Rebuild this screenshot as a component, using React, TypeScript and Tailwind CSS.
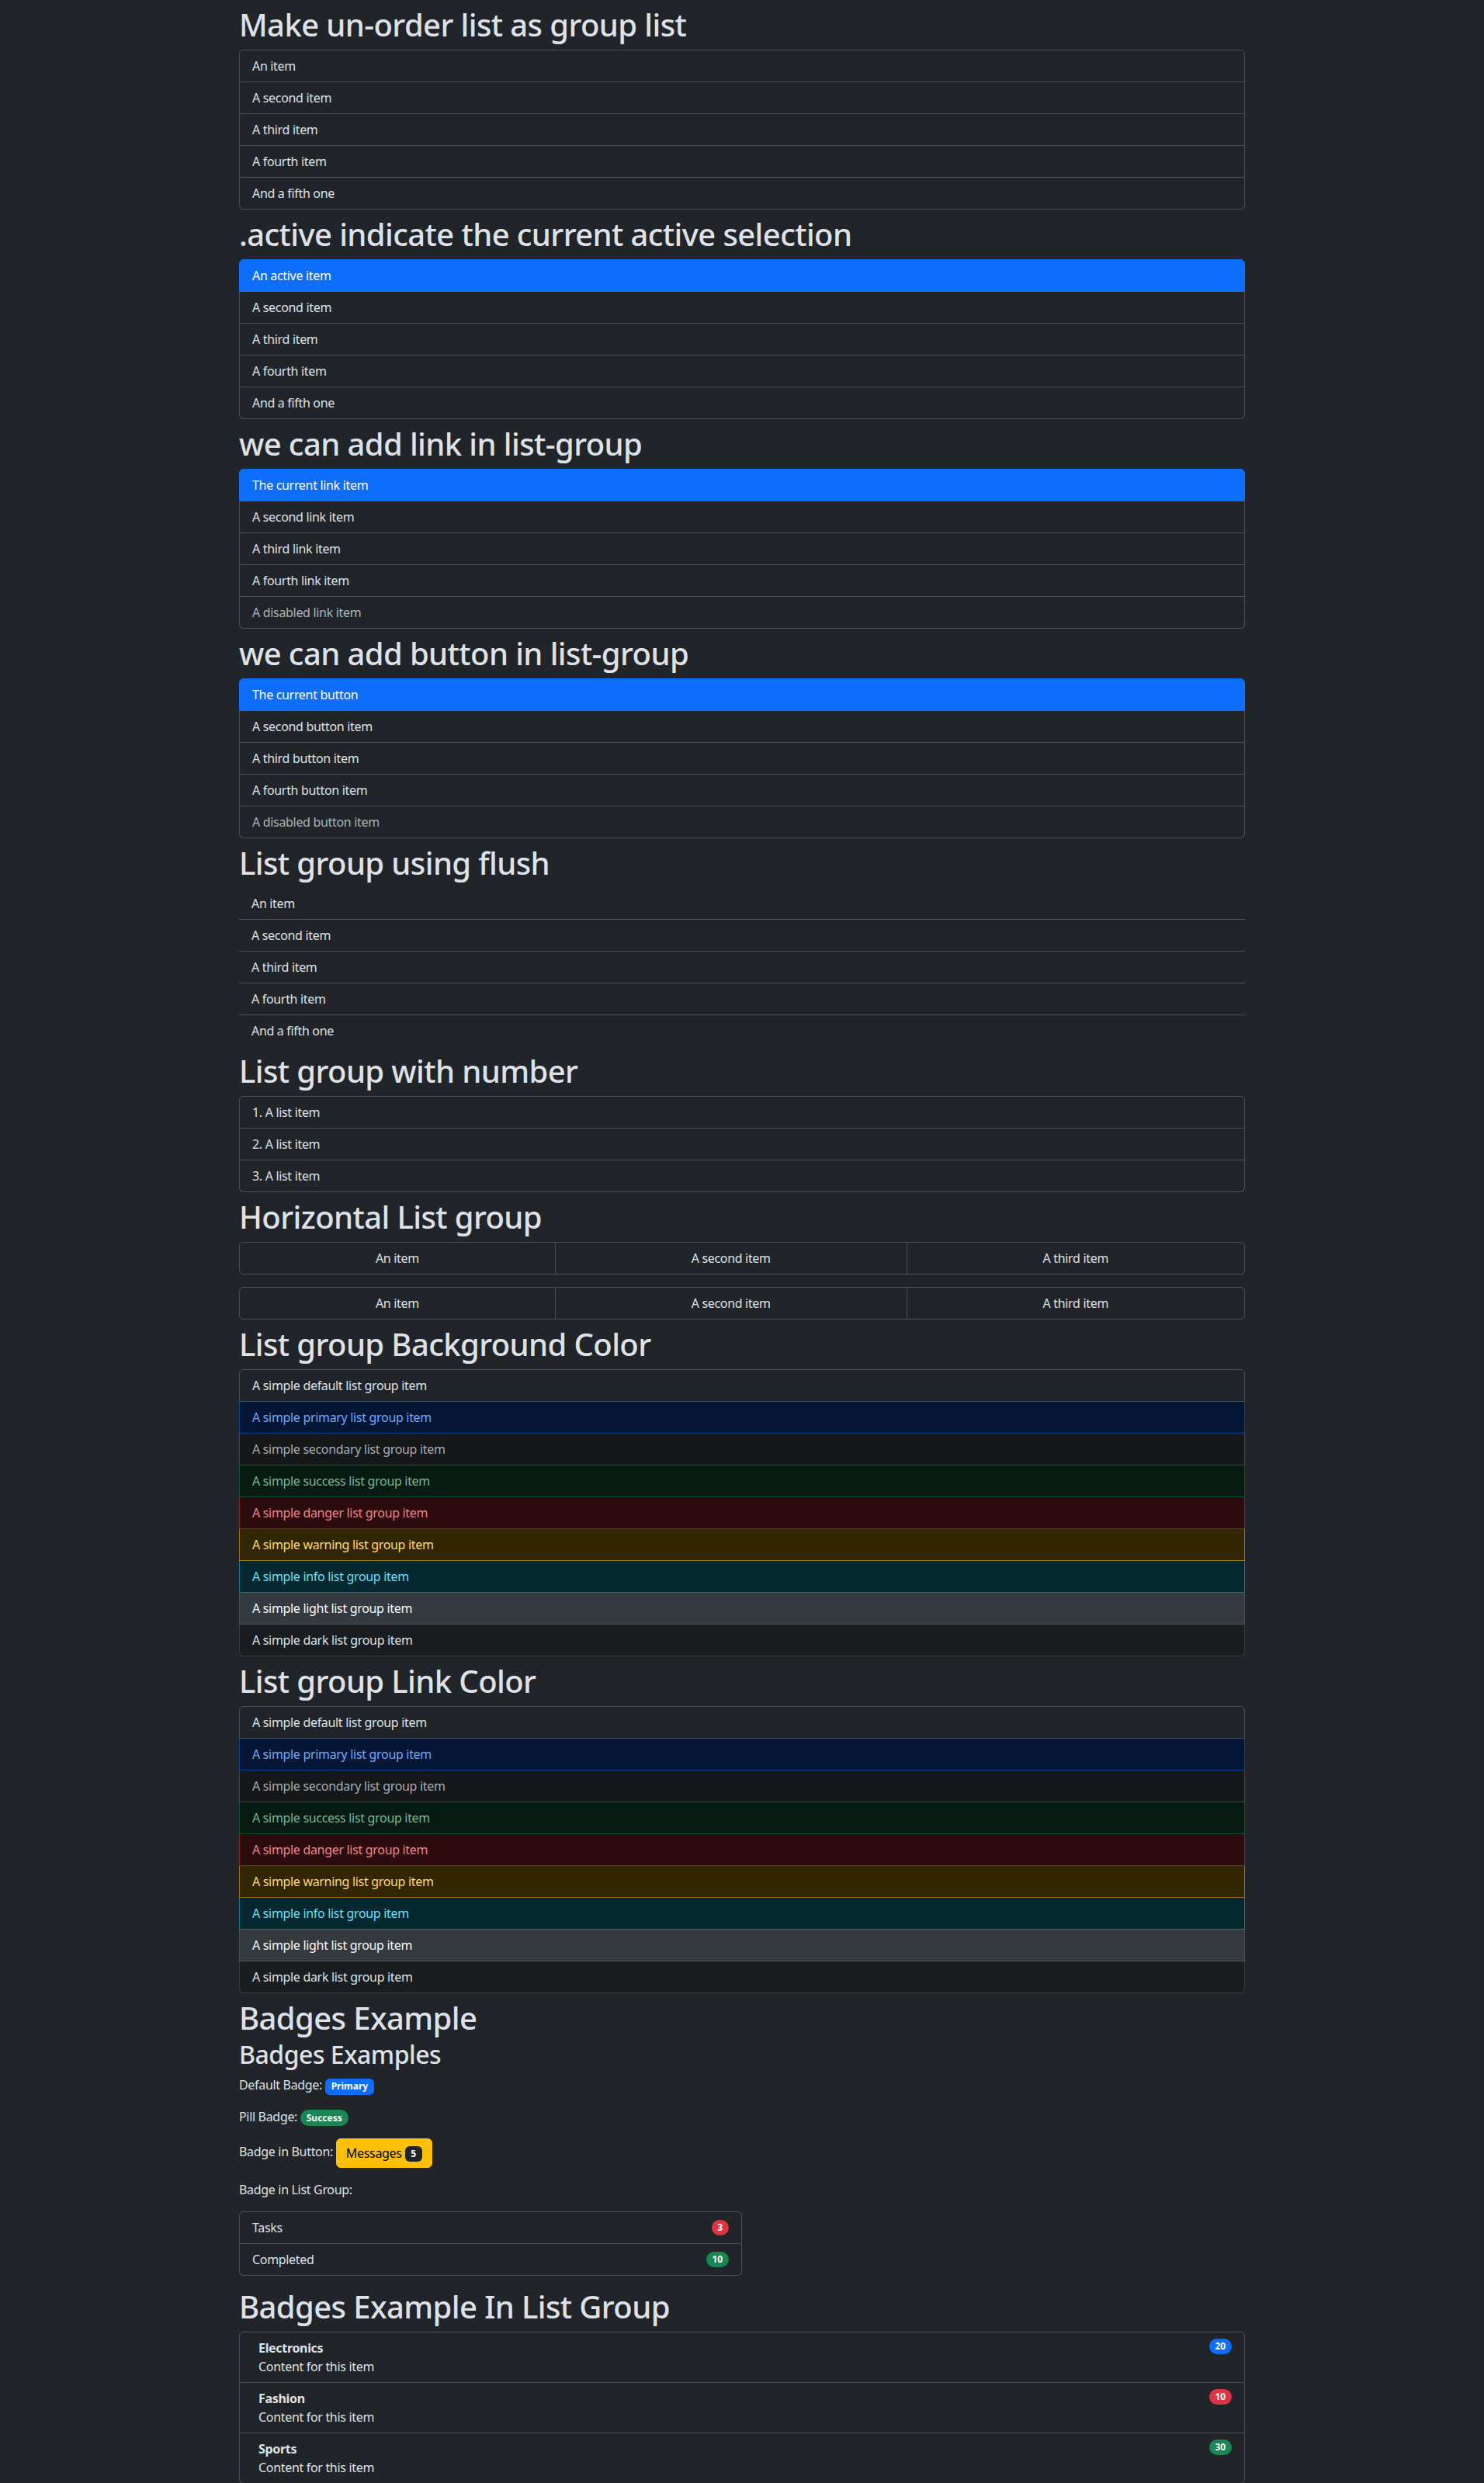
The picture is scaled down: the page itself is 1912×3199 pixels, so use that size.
import React from "react";

const BASIC = ["An item", "A second item", "A third item", "A fourth item", "And a fifth one"];

const TONES = [
  { label: "default", cls: "bg-[#212529] text-[#dee2e6] border-[#495057]" },
  { label: "primary", cls: "bg-[#031633] text-[#6ea8fe] border-[#084298]" },
  { label: "secondary", cls: "bg-[#161719] text-[#a7acb1] border-[#41464b]" },
  { label: "success", cls: "bg-[#051b11] text-[#75b798] border-[#0f5132]" },
  { label: "danger", cls: "bg-[#2c0b0e] text-[#ea868f] border-[#842029]" },
  { label: "warning", cls: "bg-[#332701] text-[#ffda6a] border-[#997404]" },
  { label: "info", cls: "bg-[#032830] text-[#6edff6] border-[#087990]" },
  { label: "light", cls: "bg-[#343a40] text-[#f8f9fa] border-[#495057]" },
  { label: "dark", cls: "bg-[#1a1d20] text-[#dee2e6] border-[#343a40]" },
];

const CATEGORIES = [
  { name: "Electronics", count: 20, badge: "bg-[#0d6efd]" },
  { name: "Fashion", count: 10, badge: "bg-[#dc3545]" },
  { name: "Sports", count: 30, badge: "bg-[#198754]" },
];

const itemBase = "px-4 py-2 border border-t-0 first:border-t first:rounded-t-md last:rounded-b-md";
const plain = "border-[#495057]";
const active = "bg-[#0d6efd] border-[#0d6efd] text-white";

function Title({ children, first, tight }: { children: React.ReactNode; first?: boolean; tight?: boolean }) {
  return (
    <h1
      className={`${first ? "" : "mt-2"} ${tight ? "mb-1" : "mb-2"} text-[40px] leading-[48px] font-[550] tracking-[-0.015em] text-[#dee2e6]`}
    >
      {children}
    </h1>
  );
}

function Badge({ children, pill, color }: { children: React.ReactNode; pill?: boolean; color: string }) {
  return (
    <span
      className={`inline-block px-[0.65em] py-[0.35em] text-[12px] font-bold leading-none tracking-normal text-white align-baseline ${pill ? "rounded-full" : "rounded-md"} ${color}`}
    >
      {children}
    </span>
  );
}

export default function App() {
  return (
    <div className="min-h-screen bg-[#212529] text-[#dee2e6] text-base leading-6 tracking-[-0.02em] font-['Noto_Sans',sans-serif] antialiased">
      <div className="w-[1296px] mx-auto pt-2 flex flex-col">
        <Title first>Make un-order list as group list</Title>
        <ul className="flex flex-col">
          {BASIC.map((t) => (
            <li key={t} className={`${itemBase} ${plain}`}>{t}</li>
          ))}
        </ul>

        <Title>.active indicate the current active selection</Title>
        <ul className="flex flex-col">
          {["An active item", ...BASIC.slice(1)].map((t, i) => (
            <li key={t} className={`${itemBase} ${i === 0 ? active : plain}`}>{t}</li>
          ))}
        </ul>

        <Title>we can add link in list-group</Title>
        <div className="flex flex-col">
          {["The current link item", "A second link item", "A third link item", "A fourth link item", "A disabled link item"].map((t, i) => (
            <a
              key={t}
              href="#"
              className={`${itemBase} ${i === 0 ? active : plain} ${i === 4 ? "text-[#dee2e6]/75" : ""}`}
            >
              {t}
            </a>
          ))}
        </div>

        <Title>we can add button in list-group</Title>
        <div className="flex flex-col">
          {["The current button", "A second button item", "A third button item", "A fourth button item", "A disabled button item"].map((t, i) => (
            <button
              key={t}
              type="button"
              className={`text-left ${itemBase} ${i === 0 ? active : plain} ${i === 4 ? "text-[#dee2e6]/75" : ""}`}
            >
              {t}
            </button>
          ))}
        </div>

        <Title>List group using flush</Title>
        <ul className="flex flex-col">
          {BASIC.map((t) => (
            <li key={t} className="px-4 py-2 border-b border-[#495057] last:border-b-0">{t}</li>
          ))}
        </ul>

        <Title>List group with number</Title>
        <ol className="flex flex-col">
          {[1, 2, 3].map((n) => (
            <li key={n} className={`${itemBase} ${plain}`}>{n}. A list item</li>
          ))}
        </ol>

        <Title>Horizontal List group</Title>
        {[0, 1].map((k) => (
          <ul key={k} className={`flex ${k === 0 ? "mb-4" : ""}`}>
            {["An item", "A second item", "A third item"].map((t) => (
              <li
                key={t}
                className="flex-auto text-center px-4 py-2 border border-l-0 border-[#495057] first:border-l first:rounded-l-md last:rounded-r-md"
              >
                {t}
              </li>
            ))}
          </ul>
        ))}

        <Title>List group Background Color</Title>
        <ul className="flex flex-col">
          {TONES.map((t) => (
            <li key={t.label} className={`${itemBase} ${t.cls}`}>
              A simple {t.label} list group item
            </li>
          ))}
        </ul>

        <Title>List group Link Color</Title>
        <div className="flex flex-col">
          {TONES.map((t) => (
            <a key={t.label} href="#" className={`${itemBase} ${t.cls}`}>
              A simple {t.label} list group item
            </a>
          ))}
        </div>

        <Title tight>Badges Example</Title>
        <h2 className="mb-2 text-[32px] leading-[38.4px] font-[550] tracking-[-0.015em]">Badges Examples</h2>
        <p className="mb-4">
          Default Badge: <Badge color="bg-[#0d6efd]">Primary</Badge>
        </p>
        <p className="mb-4">
          Pill Badge: <Badge pill color="bg-[#198754]">Success</Badge>
        </p>
        <p className="mb-4">
          Badge in Button:{" "}
          <button
            type="button"
            className="inline-block px-3 py-1.5 rounded-md border border-[#ffc107] bg-[#ffc107] text-black align-middle"
          >
            Messages{" "}
            <span className="relative -top-px inline-block px-[0.65em] py-[0.35em] text-[12px] font-bold leading-none tracking-normal rounded-md bg-[#212529] text-white">
              5
            </span>
          </button>
        </p>
        <p className="mb-4">Badge in List Group:</p>
        <ul className="w-1/2 flex flex-col mb-2">
          {[
            { t: "Tasks", n: 3, c: "bg-[#dc3545]" },
            { t: "Completed", n: 10, c: "bg-[#198754]" },
          ].map((r) => (
            <li key={r.t} className={`flex items-center justify-between ${itemBase} ${plain}`}>
              {r.t}
              <Badge pill color={r.c}>{r.n}</Badge>
            </li>
          ))}
        </ul>

        <Title>Badges Example In List Group</Title>
        <ol className="flex flex-col">
          {CATEGORIES.map((c) => (
            <li key={c.name} className={`flex items-start justify-between ${itemBase} ${plain}`}>
              <div className="ms-2 me-auto">
                <div className="font-bold">{c.name}</div>
                Content for this item
              </div>
              <Badge pill color={c.badge}>{c.count}</Badge>
            </li>
          ))}
        </ol>
      </div>
    </div>
  );
}
